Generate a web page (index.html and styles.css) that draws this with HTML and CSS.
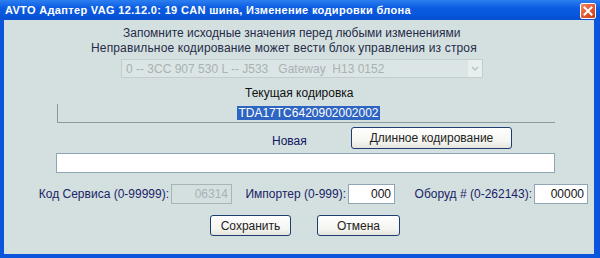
FILE: index.html
```html
<!DOCTYPE html>
<html lang="ru">
<head>
  <meta charset="UTF-8">
  <title>Изменение кодировки блока</title>
  <link rel="stylesheet" href="styles.css">
</head>
<body>

  <div class="window">
    <div class="titlebar">
      <span class="title-text">AVTO Адаптер VAG 12.12.0: 19 CAN шина, Изменение кодировки блона</span>
      <span class="close-btn">
        <svg width="14" height="14" viewBox="0 0 14 14">
          <path d="M3.5 3.5 L10.5 10.5 M10.5 3.5 L3.5 10.5" stroke="#fff" stroke-width="2" stroke-linecap="square"/>
        </svg>
      </span>
    </div>

    <div class="client">
      <div class="note note-1">Запомните исходные значения перед любыми изменениями</div>
      <div class="note note-2">Неправильное кодирование может вести блок управления из строя</div>

      <div class="select-box">
        <span class="select-text">0 -- 3CC 907 530 L -- J533 &nbsp;&nbsp;Gateway &nbsp;H13 0152</span>
        <span class="select-arrow">
          <svg width="8" height="6" viewBox="0 0 8 6">
            <path d="M1 1 L4 4 L7 1" stroke="#b8c0c0" stroke-width="1.4" fill="none"/>
          </svg>
        </span>
      </div>

      <div class="caption">Текущая кодировка</div>
      <div class="coding-field"><span class="selected">TDA17TC6420902002002</span></div>

      <div class="new-row">
        <span class="new-label">Новая</span>
        <button class="btn btn-long">Длинное кодирование</button>
      </div>
      <input class="new-input" type="text">

      <div class="params-row">
        <label class="param-label label-service">Код Сервиса (0-99999):</label>
        <input class="param-input input-service" type="text" value="06314" disabled>
        <label class="param-label label-importer">Импортер (0-999):</label>
        <input class="param-input input-importer" type="text" value="000">
        <label class="param-label label-equip">Оборуд # (0-262143):</label>
        <input class="param-input input-equip" type="text" value="00000">
      </div>

      <div class="buttons-row">
        <button class="btn btn-save">Сохранить</button>
        <button class="btn btn-cancel">Отмена</button>
      </div>
    </div>
  </div>

</body>
</html>
```

FILE: styles.css
```css
body {
  margin: 0;
  padding: 0;
  font-family: 'Liberation Sans', Arial, sans-serif;
  font-size: 12px;
  color: #1a2150;
  background: #fff;
}

.window {
  width: 600px;
  height: 258px;
  box-sizing: border-box;
  display: flex;
  flex-direction: column;
  background: #0a55dc;
}

.titlebar {
  height: 20px;
  display: flex;
  align-items: center;
  justify-content: space-between;
  padding: 0 4px 0 5px;
  background: linear-gradient(#2d7ff0, #0b5ce2 40%, #0754da 80%, #0a4fd0);
}

.title-text {
  color: #fff;
  font-weight: bold;
  font-size: 11px;
  letter-spacing: 0.33px;
}

.close-btn {
  width: 14px;
  height: 14px;
  display: flex;
  align-items: center;
  justify-content: center;
  background: linear-gradient(135deg, #f08a60, #e0522a 60%, #c8401c);
  border: 1px solid #fff;
  border-radius: 2px;
  margin-top: 2px;
}

.client {
  flex: 1;
  margin: 0 6px 4px 4px;
  background: #d4e0e0;
}

.note {
  line-height: 15px;
  white-space: nowrap;
  color: #262b48;
}

.note-1 {
  margin: 6px 0 0 119px;
}

.note-2 {
  margin: 0 0 0 87px;
  letter-spacing: 0.15px;
}

.select-box {
  width: 362px;
  height: 19px;
  margin: 3px 0 0 117px;
  box-sizing: border-box;
  border: 1px solid #c4cccc;
  background: #dbe5e5;
  display: flex;
  align-items: center;
  justify-content: space-between;
}

.select-text {
  color: #a8b2b2;
  padding-left: 4px;
  white-space: nowrap;
}

.select-arrow {
  width: 14px;
  height: 17px;
  display: flex;
  align-items: center;
  justify-content: center;
  background: #e6eeee;
}

.caption {
  margin: 8px 0 0 241px;
  line-height: 15px;
  color: #101010;
}

.coding-field {
  width: 498px;
  height: 19px;
  margin: 3px 0 0 53px;
  box-sizing: border-box;
  border-left: 1px solid #8c9aa0;
  border-bottom: 1px solid #8c9aa0;
  display: flex;
  align-items: center;
  justify-content: center;
}

.selected {
  background: #2f65c2;
  color: #fff;
  line-height: 14px;
  padding: 0 1px;
  margin-left: 4px;
}

.new-row {
  display: flex;
  align-items: center;
  margin: 4px 0 0 268px;
  height: 22px;
}

.new-label {
  width: 79px;
  color: #101860;
  margin-top: 6px;
}

.btn {
  font-family: 'Liberation Sans', Arial, sans-serif;
  font-size: 12px;
  color: #222;
  background: linear-gradient(#ffffff, #f4f4f0 70%, #e4e4dc);
  border: 1px solid #1e3d70;
  border-radius: 3px;
  padding: 0;
  box-sizing: border-box;
}

.btn-long {
  width: 161px;
  height: 22px;
}

.new-input {
  display: block;
  width: 499px;
  height: 20px;
  margin: 4px 0 0 52px;
  box-sizing: border-box;
  border: 1px solid #8fa6b8;
  background: #fff;
}

.params-row {
  display: flex;
  align-items: center;
  height: 20px;
  margin: 11px 0 0 32px;
}

.param-label {
  text-align: right;
  margin-right: 2px;
  color: #1a2366;
  white-space: nowrap;
}

.label-service {
  width: 133px;
}

.label-importer {
  width: 106px;
  margin-left: 8px;
}

.label-equip {
  width: 127px;
  margin-left: 10px;
}

.param-input {
  height: 20px;
  box-sizing: border-box;
  border: 1px solid #8fa6b8;
  background: #fff;
  font-family: 'Liberation Sans', Arial, sans-serif;
  font-size: 12px;
  text-align: right;
  padding: 0 3px;
  color: #111;
}

.input-service {
  width: 61px;
  background: #d4e0e0;
  border-color: #a8b4b4;
  color: #a8b2b2;
}

.input-importer {
  width: 47px;
}

.input-equip {
  width: 54px;
}

.buttons-row {
  display: flex;
  gap: 26px;
  margin: 11px 0 0 206px;
}

.btn-save {
  width: 81px;
  height: 21px;
}

.btn-cancel {
  width: 83px;
  height: 21px;
}
```
